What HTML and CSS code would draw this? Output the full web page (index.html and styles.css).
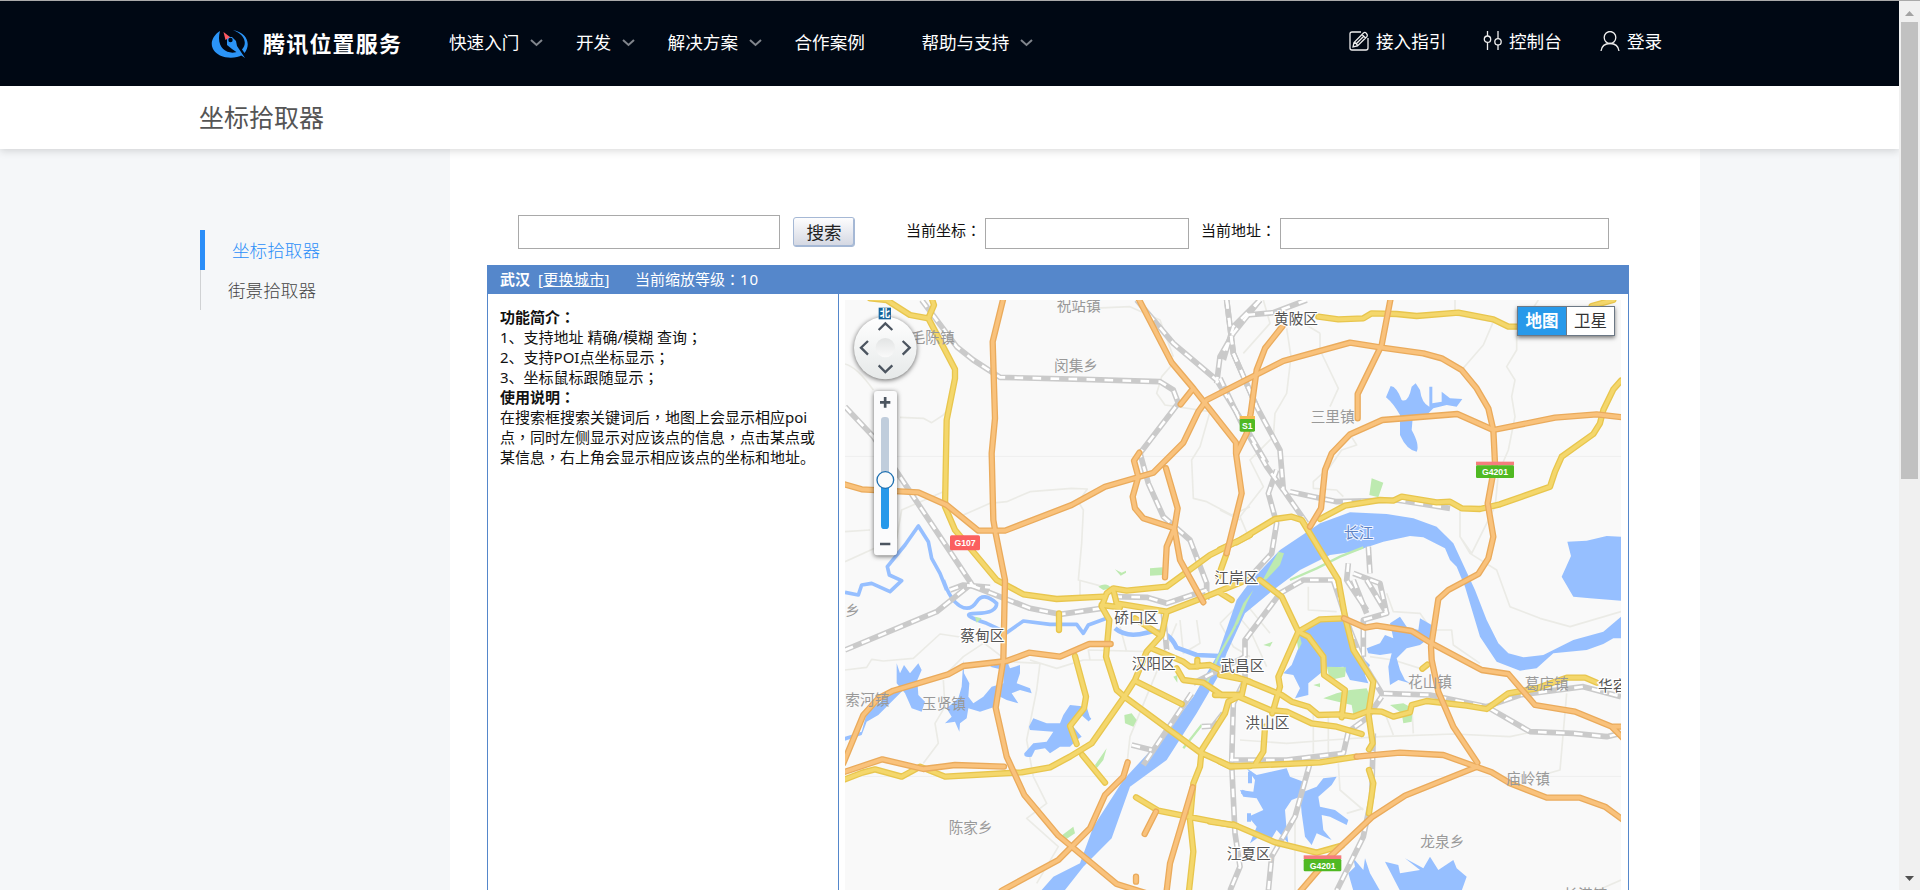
FILE: index.html
```html
<!DOCTYPE html>
<html>
<head>
<meta charset="utf-8">
<title>坐标拾取器</title>
<link rel="stylesheet" href="styles.css">
</head>
<body>
<div class="page">
<div class="view">
<header class="top">
  <div class="logo">
    <svg width="38" height="30" viewBox="0 0 38 30"><path d="M9 2C-2 9-2 21 9 26.500C17 30 26 29 31 26L28 22C19 27 4 21 9 2Z" fill="#2b94f7"/><path d="M22 1C37 4 40 16 33.500 24L31 20.500C37 14 33 5 22 1Z" fill="#2b94f7"/><path d="M16 8L21 8 25 12 26 17 34 29 21 20 16 16Z" fill="#2b94f7"/><path d="M12.500 3L19 8 14.500 11Z" fill="#ff5a62"/><circle cx="19.500" cy="11" r="2.200" fill="#000814"/></svg>
    <span>腾讯位置服务</span>
  </div>
  <nav class="nav">
    <a>快速入门<svg class="chev" viewBox="0 0 13 8"><path d="M1 1L6.500 6 12 1"/></svg></a>
    <a>开发<svg class="chev" viewBox="0 0 13 8"><path d="M1 1L6.500 6 12 1"/></svg></a>
    <a>解决方案<svg class="chev" viewBox="0 0 13 8"><path d="M1 1L6.500 6 12 1"/></svg></a>
    <a>合作案例<svg class="chev" viewBox="0 0 13 8"></svg></a>
    <a>帮助与支持<svg class="chev" viewBox="0 0 13 8"><path d="M1 1L6.500 6 12 1"/></svg></a>
  </nav>
  <div class="user">
    <a class="u1"><svg width="20" height="20" viewBox="0 0 20 20"><path d="M12 1H3Q1 1 1 3V17Q1 19 3 19H17Q19 19 19 17V7M4 16L5 11.500 14.500 2Q16 .7 17.500 2.500T18 5.500L8.500 15ZM13 3.500L16.500 7M5 11.500Q8 12 8.500 15M7.500 12.500L14.500 5.500"/></svg>接入指引</a>
    <a class="u2"><svg width="19" height="20" viewBox="0 0 19 20"><path d="M4.500 0V5M4.500 11.500V19M15 0V7.500M15 14V19"/><circle cx="4.500" cy="8.200" r="3.200"/><circle cx="15" cy="10.800" r="3.200"/></svg>控制台</a>
    <a class="u3"><svg width="20" height="20" viewBox="0 0 20 20"><ellipse cx="10" cy="6.500" rx="5.800" ry="6"/><path d="M1 20Q2 12.500 10 12.500T19 20"/></svg>登录</a>
  </div>
</header>
<div class="titlebar"><h1>坐标拾取器</h1></div>
<main class="main">
  <aside class="side">
    <a class="on">坐标拾取器</a>
    <a>街景拾取器</a>
  </aside>
  <section class="content">
    <form class="form">
      <input class="q" aria-label="搜索词">
      <button type="button" class="btn">搜索</button>
      <label class="l1">当前坐标<i>：</i></label><input class="pos" aria-label="坐标">
      <label class="l2">当前地址<i>：</i></label><input class="addr" aria-label="地址">
    </form>
    <div class="panel">
      <div class="bar"><b>武汉</b><span class="city">[<u>更换城市</u>]</span><span>当前缩放等级<i>：</i><em>10</em></span></div>
      <div class="body">
        <div class="info"><b>功能简介<i>：</i></b><br>1、支持地址 精确/模糊 查询<i>；</i><br>2、支持POI点坐标显示<i>；</i><br>3、坐标鼠标跟随显示<i>；</i><br><b>使用说明<i>：</i></b><br>在搜索框搜索关键词后<i>，</i>地图上会显示相应poi<br>点<i>，</i>同时左侧显示对应该点的信息<i>，</i>点击某点或<br>某信息<i>，</i>右上角会显示相应该点的坐标和地址。</div>
        <div class="map">
<svg class="tiles" width="776" height="590" viewBox="45 30 2328 1770">
<defs>
<g id="thin">
 <path d="M45 222Q80 230 130 300M210 382L280 385 305 398 340 375 360 350M400 675L480 640 530 635 600 605 725 595 772 597 745 635 760 660 755 760 745 870 820 890M45 725L120 720M45 815L200 745 215 660 340 605M780 55L900 50 990 90 1030 200M1028 222L995 260 980 310 1005 345 1140 365 1110 470 1085 510 1090 625 1130 635 1205 675 1260 650"/>
 <g transform="translate(1170)"><path d="M130 30L150 100 70 190M200 115L213 200 200 310 165 370 160 440 90 510 130 590 60 680 90 750M300 130V180L355 295 330 350M250 100L300 130M705 30L705 75 820 95 790 165 725 240M955 30L890 130 890 180 860 230 885 270 875 320 885 380 865 480 835 550 825 655M390 433L410 465 365 480 330 530 280 575V595L350 600 370 620M0 660L60 690M720 660V740L750 790 830 840 870 950 960 985 1050 1010 1203 965M720 740L755 790 800 700 825 650"/></g>
 <g transform="translate(0 870)"><path d="M45 270L110 262 125 238 160 243 250 235 330 162 450 180 535 245 630 250 620 330 590 480 610 590 650 670 590 715 685 800 620 910M340 300L345 380 315 430 325 490 280 550M460 190L400 230 340 290M600 240L680 265 760 240 830 240M780 240L775 210 960 215M870 140L890 215M1050 120L1060 220 1110 190 1100 120M1170 130L1210 200 1260 230M1040 130L900 470 890 560M750 50V0"/></g>
 <g transform="translate(1170 870)"><path d="M60 480L200 490 330 480 480 470 700 462 870 470 940 455M325 400V520L300 550M520 465L495 400M580 460L575 370M1040 340L1020 570 950 590M355 550L360 630 430 690M225 700V932M380 700L430 685M280 400V520M0 130L40 90 90 150 140 260M60 50L150 160M265 20V90L350 95M500 40L520 95 600 100 635 150 695 150 700 195 780 250M450 230L520 240 600 265M1130 932L1203 900"/></g>
</g>
<g id="rail">
 <path d="M275 30L380 170 430 210 510 262 760 268 990 275 1030 300 1045 340 930 490 955 580 1000 680 1080 750 1130 880 1130 930M45 350L130 440 230 590 350 770 430 890M360 900L400 885 480 892M920 30L1030 160 1160 270 1240 400 1310 520M1190 30L1210 190 1280 350M1290 30L1210 130 1170 200 1160 280"/>
 <g transform="translate(1170)"><path d="M20 30L40 190 110 350 180 480 190 600 260 700M120 30L40 110 10 210M260 30L160 68 80 75M0 265L60 390 140 530 190 600M170 540L145 610 170 700 155 790 100 850M210 605L350 635 530 630 690 655M445 770L450 850M385 820L380 870 440 960M400 850L480 880 500 970"/></g>
 <g transform="translate(0 870)"><path d="M45 210L320 95 420 15 600 85 690 103 815 85M850 50L950 52 1010 70 1130 30M1085 340L940 555M905 495L965 510M1000 100L1010 210M1115 440L1150 438 1180 400M1245 230L1090 310"/></g>
 <g transform="translate(1170 870)"><path d="M350 0L250 0 180 40 75 180 75 300 40 370 35 550 45 760 60 860 30 932M340 0L390 150 430 250 485 340 630 345 800 380 930 455 1060 460 1160 470 1203 460M30 540L200 540 370 520 385 455 440 415 485 350M270 550L225 710 155 830 145 932M460 460L455 650 430 770 350 932M800 380L900 345 1090 320 1203 350M440 0L500 100 430 120 430 230M400 0L440 100"/></g>
</g>
<g id="yel">
 <path d="M120 25L170 30 240 75 295 85 312 45 305 25M295 85L375 238 375 265 350 390 345 650 375 720 500 870 580 913 680 927 820 920M1260 735L1140 795 1010 890 890 902 850 895 830 910 815 950 838 990 828 1100 860 1200 883 1220"/>
 <g transform="translate(1170)"><path d="M295 80L355 88 430 85 455 70 530 72 590 78 715 68 820 88 865 110 900 110M1115 48L1180 30M1203 272L1180 298 1150 360 1140 400 1120 432 1025 500 1005 545 990 590 905 620 840 643 780 657 725 655 690 635 650 637 545 620 520 632 480 630 375 647 300 687M0 778L60 750 165 687 215 680 245 690 355 870 375 980 400 1080 460 1175 445 1270 458 1360 447 1378M90 735L50 757M20 790L-5 860"/></g>
 <g transform="translate(0 870)"><path d="M883 350L785 490 720 530 660 562 575 577 345 590 270 560 215 590 135 568 97 578 45 598M1010 95L995 165 950 215 915 300 883 350 1110 517 1200 558 1260 558M850 30L860 70 1010 95 1115 55 1250 0M1165 35L1205 60M815 75L870 82M735 228L768 350 762 385 720 438 740 492M757 525L825 608M920 305L1055 372M965 205L1060 245 1080 260 1140 255 1200 285 1260 305M1040 265L1060 300 1120 308 1175 345 1230 345M1245 300L1235 345 1195 365 1185 400 1115 510 1110 560 1090 610 1080 720 1090 815 1077 932M918 652L985 692 1100 715 1220 738M687 100V150M915 115L990 165M1102 240V260"/></g>
 <g transform="translate(1170 870)"><path d="M120 0L185 50 235 155 175 290 180 320 157 400M135 440L130 515 108 550M235 155L265 170 310 230 312 285 375 330 365 412M235 155L300 118 372 115M0 285L75 300 185 345 215 365 265 380 295 405 355 403 400 410 445 393 485 395 520 410 570 397 575 375 620 363 740 377 800 387 865 340 950 325 1040 293 1095 293 1130 308M-15 345L45 345 150 390 200 395 275 430 350 440 425 462M0 545L30 560 300 547 410 530M447 570L460 610 447 700M40 733L55 740 165 787 290 818 365 797M-30 725L40 735M607 266L622 254"/></g>
</g>
<g id="ora">
 <path d="M520 25L488 155 495 385 485 490 490 690 497 730 525 870 520 1110 497 1253 530 1400 583 1515 685 1637 725 1670 860 1782 950 1810M40 582L95 598 265 607 350 645 445 722 525 722 725 645 825 590 970 548 1060 458 1105 365 1130 330 1360 213 1560 158 1650 172 1780 190 1835 205 1895 240 1940 295 1975 355 1990 420 1995 520 1973 640 1990 740 1975 805 1945 852 1855 900 1825 927 1803 1070 1805 1110 1825 1205 1870 1310 1942 1418M925 25L1025 218 1090 295 1218 458 1218 490 1235 610 1190 790M1090 295L1052 343M928 488L912 512 925 560 908 620 915 655 940 685 1033 715 1010 770 1005 862M1008 535L1043 655 1033 715 1050 810 1120 937"/>
 <g transform="translate(1170)"><path d="M188 108L135 175 110 240 92 370 80 430 50 490M512 25L485 165 413 312 413 385M270 710L303 655 315 540 335 490 390 433 487 390 712 372 820 420 1005 383 1130 373 1210 382"/></g>
 <g transform="translate(0 870)"><path d="M40 550L100 405 145 355 190 332 355 283 400 258 530 243 597 218 690 230 778 192 842 192M40 577L157 538 280 567 375 555 522 560M893 547L880 590 825 645 780 745 685 840 515 932M1088 622L1020 850 1010 932M978 695L944 762M918 890V905"/></g>
 <g transform="translate(1170 870)"><path d="M372 115L435 143 470 137 575 153 635 190 785 270 865 282 945 375 1065 395 1175 440 1210 475M1180 440H1210M410 530L540 518 670 525 815 577 870 610 980 653 1080 653 1155 680 1210 720M772 560L555 647 455 712 330 830 240 935"/></g>
</g>
</defs>
<rect x="45" y="30" width="2328" height="1770" fill="#f9f9f9"/>
<path d="M45 499H2373M45 1459H2373" stroke="#efefef" stroke-width="3"/>
<use href="#thin" class="thin"/>
<g fill="#96bfff">
 <path d="M635 1800L670 1760 750 1720 790 1610 880 1470 1000 1340 1090 1220 1165 1090 1220 930 1260 875 1350 780 1470 700 1560 667 1670 672 1750 685 1820 710 1870 760 1935 900 1970 990 2005 1060 2035 1090 2080 1102 2140 1095 2230 1050 2320 1025 2373 980V1045L2350 1045 2320 1062 2270 1080 2170 1090 2120 1135 2070 1142 2000 1115 1950 1040 1905 890 1880 830 1860 810 1845 775 1780 742 1740 738 1660 755 1570 785 1500 795 1410 840 1330 900 1245 970 1190 1090 1170 1150 1100 1270 1010 1410 900 1490 845 1645 760 1730 705 1800Z"/>
 <g transform="translate(1170)"><path d="M498 322L512 288Q530 290 545 330 565 340 575 290L587 280 600 300Q605 340 628 350V290H637V340L665 335V305L690 325 727 327 710 350 680 345 640 355 620 375 578 385 575 420Q600 465 590 485 560 480 540 435V375Q520 340 498 322Z"/><path d="M1042 755L1100 752 1160 738 1203 740V932L1110 925 1060 920 1025 860 1053 798Z"/></g>
 <g transform="translate(0 870)"><path d="M45 470L95 455 110 400 165 355 195 330 220 330 175 375 145 405 110 425 95 465 45 482ZM200 250L210 280 222 255 240 280 265 250 275 270 262 300 265 345 285 365 275 395 245 385 225 340 200 310ZM400 240L402 280 418 310 415 350 430 370 460 350 485 320 520 310 520 270 480 260 530 240 540 265 570 255 570 280 560 310 600 325 605 340 570 330 545 340 565 370 530 360 500 345 495 380 450 395 415 385 410 415 390 430 388 455 375 425 345 430 365 410 350 385 385 355 395 320ZM597 440L610 415 650 430 690 430 700 405 720 375 770 380 782 420 750 400 730 440 755 470 740 480 720 500 690 500 660 520 645 505 615 510 605 530Q580 535 583 520L610 490 650 485 670 455 600 450Z"/></g>
 <g transform="translate(1170 870)"><path d="M190 280L215 255 235 205 235 165 300 125 372 120 395 180 410 215 450 255 435 285 445 310 390 300 370 260 320 265 265 310 265 345 225 355 240 325 220 285ZM440 205L480 190 495 165 520 175 510 130 540 110 560 140 595 150 600 115 635 135 640 165 600 195 560 205 530 235 540 270 555 300 570 310 535 300 510 315 505 260 515 220 480 225 445 220ZM80 565L110 585 200 565 210 590 250 605 240 650 215 660 195 690 200 750 205 790 170 750 155 775 125 765 90 790 110 740 85 710 130 690 110 655 70 650 60 630 100 635 105 600ZM240 640L290 620 310 595 350 590 335 615 295 650 300 680 345 690 385 720 380 735 330 710 305 705 310 750 335 780 290 760 275 795 255 770 245 700ZM385 880L405 860 400 835 430 870 435 835 450 880 480 932H400ZM495 845L535 855 540 880 600 870 555 835 610 865 630 830 655 870 700 840 710 865 740 890 725 932H540Z"/></g>
</g>
<g fill="none" stroke="#96bfff" stroke-linejoin="round">
 <path stroke-width="11" d="M350 900L330 850 305 805 295 755 265 708 225 765 172 830 178 855 215 872 180 905 125 880 95 885 85 915 45 907M340 870Q360 930 390 948T440 935 500 940Q500 970 440 970T470 1000L530 1028 580 993 660 1003 740 1003 760 1030 775 1005 830 985"/>
 <path stroke-width="14" d="M855 1015Q890 1045 950 1028T1040 1073L1100 1095 1170 1098"/>
 <path stroke-width="12" d="M1235 1505L1260 1515M1260 1445V1480M1257 1570V1595M740 1255L780 1290"/>
</g>
<g fill="#bdeab0">
 <path d="M1625 565L1660 578 1645 622 1618 615ZM1345 785L1362 790 1350 825 1310 868 1298 870ZM960 835L998 832 1000 855 960 857ZM855 838L875 848 888 842 888 848 872 857ZM805 890Q830 875 845 895L820 900ZM883 1275L905 1270 920 1290 910 1310 885 1300ZM690 1640L730 1610 735 1630 705 1650ZM435 980L455 985 440 998ZM1030 1160L1042 1155 1042 1178ZM795 1425L830 1375 820 1410 800 1435Z"/>
 <g transform="translate(1170 870)"><path d="M390 330L440 325 455 360 440 400 400 405 395 375 310 355 350 340ZM320 260L378 262 375 290 330 300ZM510 375L550 370 578 385 575 425 550 430 545 400ZM280 315L300 310 300 322ZM130 195L158 185 150 200ZM240 170L245 190 235 210 230 180ZM100 30L80 70 55 130 30 165 70 70Z"/></g>
</g>
<path d="M1380 870L1460 835 1530 800 1600 772M1060 1375L1115 1305M1130 1180L1165 1100 1215 1010" fill="none" stroke="#bdeab0" stroke-width="7"/>
<use href="#rail" class="rail"/><use href="#rail" class="rail dash"/>
<use href="#yel" class="yc"/><use href="#yel" class="yi"/>
<use href="#ora" class="oc"/><use href="#ora" class="oi"/>
<g class="town">
 <text x="680" y="63">祝站镇</text><text x="242" y="160">毛陈镇</text><text x="672" y="242">闵集乡</text><text x="1442" y="395">三里镇</text>
 <text x="2" y="977">陂乡</text><text x="46" y="1245">索河镇</text><text x="276" y="1258">玉贤镇</text><text x="356" y="1630">陈家乡</text>
 <text x="1734" y="1190">花山镇</text><text x="2084" y="1198">葛店镇</text><text x="2028" y="1483">庙岭镇</text><text x="1771" y="1671">龙泉乡</text><text x="2200" y="1830">长港镇</text>
</g>
<g class="dist">
 <text x="1332" y="103">黄陂区</text><text x="1153" y="879">江岸区</text><text x="391" y="1052">蔡甸区</text><text x="853" y="1000">硚口区</text><text x="905" y="1138">汉阳区</text><text x="1171" y="1142">武昌区</text><text x="1246" y="1314">洪山区</text><text x="1190" y="1708">江夏区</text><text x="2304" y="1203">华容区</text>
</g>
<text x="1542" y="744" class="river">长江</text>
<g class="shield">
 <rect x="360" y="736" width="90" height="45" rx="5" fill="#fb5f5f"/><text x="405" y="769">G107</text>
 <rect x="1229" y="378" width="46" height="9" fill="#f6bb53"/><rect x="1229" y="387" width="46" height="38" rx="4" fill="#50b923"/><text x="1252" y="416">S1</text>
 <rect x="1938" y="515" width="114" height="11" fill="#f57d7d"/><rect x="1938" y="526" width="114" height="38" rx="4" fill="#50b923"/><text x="1995" y="555">G4201</text>
 <rect x="1421" y="1696" width="113" height="11" fill="#f57d7d"/><rect x="1421" y="1707" width="113" height="37" rx="4" fill="#50b923"/><text x="1478" y="1736">G4201</text>
</g>
<defs><linearGradient id="disc" x2="0" y2="1"><stop stop-color="#fff"/><stop offset="1" stop-color="#e6e9e9"/></linearGradient><linearGradient id="hub" x2="0" y2="1"><stop stop-color="#e2e4e4"/><stop offset="1" stop-color="#fafafa"/></linearGradient></defs>
<g class="ctl">
 <circle cx="166" cy="174" r="94" fill="url(#disc)" class="sh"/><circle cx="166" cy="173" r="29" fill="url(#hub)"/>
 <path d="M146 120L166 100 187 120M146 226L166 246 187 226M114 153L93 173 114 194M218 153L239 173 218 194" fill="none" stroke="#4c5560" stroke-width="7"/>
 <rect x="146" y="53" width="37" height="35" fill="#17649c"/><text x="164.500" y="81">北</text>
 <rect x="132" y="303" width="69" height="493" rx="10" fill="#fbfbfc" class="sh"/>
 <path d="M150 337H181M165.500 321V353M150 762H181" stroke="#4c5560" stroke-width="8"/>
 <rect x="153" y="381" width="24" height="190" rx="10" fill="#c0cddc"/><rect x="153" y="570" width="24" height="147" rx="10" fill="#2799ea"/>
 <circle cx="166" cy="570" r="25" fill="#fbfbfb" stroke="#1d6fb0" stroke-width="4"/>
</g>
</svg>
          <div class="types"><b>地图</b><span>卫星</span></div>
        </div>
      </div>
    </div>
  </section>
</main>
</div>
<div class="scroll"><svg width="21" height="22" viewBox="0 0 21 22"><path d="M6 15L10.500 10 15 15Z" fill="#a3a3a3"/></svg><div class="thumb"></div><svg class="down" width="21" height="20" viewBox="0 0 21 20"><path d="M6 6H15L10.500 11Z" fill="#505050"/></svg></div>
</div>
</body>
</html>
```

FILE: styles.css
```css
* { box-sizing: border-box; }
body { margin: 0; font-family: "Noto Sans", "Noto Sans CJK SC", sans-serif; font-size: 15px; color: #111; }
i { font-style: normal; font-family: "Noto Sans CJK TC", sans-serif; line-height: 1; }
em { font-style: normal; letter-spacing: 1px; }
.page { display: flex; height: 890px; overflow: hidden; border-top: 1px solid #aaa; }
.view { width: 1899px; height: 889px; overflow: hidden; background: #f5f7f9; }
.top { display: flex; align-items: center; height: 85px; padding-left: 211px; background: #000814; color: #fff; font: 17.6px/26px "Noto Sans CJK SC", sans-serif; white-space: nowrap; }
.logo { display: flex; align-items: center; width: 238px; }
.logo span { margin: -4px 0 0 14px; font-size: 22px; font-weight: 700; letter-spacing: 1.2px; }
.nav { display: flex; gap: 32.500px; width: 900px; margin-top: -4px; }
.nav a { display: flex; align-items: center; }
.chev { width: 13px; height: 8px; margin: 2px 0 0 11px; fill: none; stroke: #80858c; stroke-width: 2; }
.user { display: flex; margin-top: -5px; }
.user a { display: flex; align-items: center; }
.user svg { margin-right: 7px; fill: none; stroke: #eee; stroke-width: 1.300; }
.u1 { width: 134px; }
.u2 { width: 117px; }
.titlebar { position: relative; height: 63px; padding-left: 199px; background: #fff; box-shadow: 0 2px 8px rgba(0, 0, 0, .15); }
.titlebar h1 { margin: 0; font: 400 25px/61px "Noto Sans CJK SC", sans-serif; color: #555; }
.main { display: flex; height: 741px; }
.side { width: 450px; padding: 81px 0 0 200px; font: 17.6px/40px "Noto Sans CJK SC", sans-serif; font-weight: 300; }
.side a { display: block; height: 40px; padding-left: 27px; border-left: 1px solid #d0d2d4; color: #444; }
.side .on { border-left: 5px solid #2b8ef8; color: #2b8ef8; }
.content { width: 1250px; padding: 66px 0 0 37px; background: #fff; }
.form { display: flex; align-items: flex-end; width: 1142px; height: 34px; padding-left: 31px; }
.form input { height: 31px; border: 1px solid #a9a9a9; background: #fff; }
.form .q { width: 262px; height: 34px; }
.btn { width: 62px; height: 30px; margin: 0 0 2px 13px; padding: 0; border: 1px solid #a5b8d5; border-radius: 3px; background: linear-gradient(#fdfdfe, #d3d7e2); box-shadow: inset -1px -1px #a5b8d5; color: #222; font: 17.6px/24px "Noto Sans CJK SC", sans-serif; }
.form label { align-self: flex-start; line-height: 30px; white-space: nowrap; }
.l1 { width: 79px; margin-left: 51px; }
.form .pos { width: 204px; }
.l2 { width: 79px; margin-left: 12px; }
.form .addr { width: 329px; }
.panel { width: 1142px; margin-top: 16px; }
.bar { display: flex; height: 29px; padding-left: 13px; background: #5587cb; color: #fff; line-height: 28px; }
.city { width: 97px; margin-left: 8px; letter-spacing: .3px; }
.bar b { width: 30px; }
.body { display: flex; height: 610px; border: 1px solid #5587cb; border-width: 0 1px; }
.info { width: 351px; padding: 13px 0 0 12px; border-right: 1px solid #5587cb; line-height: 20px; white-space: nowrap; }
.map { position: relative; width: 776px; height: 590px; margin: 6px 0 0 6px; }
.tiles { display: block; }
.tiles use { fill: none; stroke-linejoin: round; }
.thin { stroke: #ebebe6; stroke-width: 5; }
.rail { stroke: #cacaca; stroke-width: 17; }
.dash { stroke: #fff; stroke-width: 8; stroke-dasharray: 26 28; }
.yc, .yi, .oc, .oi { stroke-linecap: round; }
.yc { stroke: #e8c64e; stroke-width: 19; }
.yi { stroke: #f4d76c; stroke-width: 11; }
.oc { stroke: #eaab5c; stroke-width: 19; }
.oi { stroke: #f9c27c; stroke-width: 11; }
.tiles text { font-family: "Noto Sans CJK SC", sans-serif; font-size: 44px; }
.town text { fill: #999; }
.dist text { fill: #555; stroke: #fff; stroke-width: 7; paint-order: stroke; }
.river { fill: #5b80c3; stroke: #edf3ff; stroke-width: 6; paint-order: stroke; }
.tiles .shield text { fill: #fff; font: 700 26px "Liberation Sans", sans-serif; text-anchor: middle; }
.sh { filter: drop-shadow(0 3px 8px rgba(0, 0, 0, .6)); }
.tiles .ctl text { fill: #fff; font-size: 31px; font-weight: 700; text-anchor: middle; }
.types { position: absolute; left: 672px; top: 6px; display: flex; width: 98px; height: 30px; border: 1px solid #6c7885; background: #fff; box-shadow: 0 2px 4px rgba(0, 0, 0, .5); color: #333; font-size: 16.500px; line-height: 27px; text-align: center; }
.types b { width: 49px; border-right: 1px solid #6c7885; background: #2799ea; color: #fff; }
.types span { flex: 1; }
.scroll { display: flex; flex-direction: column; width: 21px; height: 889px; background: #f0f0f0; }
.thumb { width: 17px; height: 457px; margin: -1px 0 0 2px; background: #c1c1c1; }
.down { margin-top: auto; }
```
